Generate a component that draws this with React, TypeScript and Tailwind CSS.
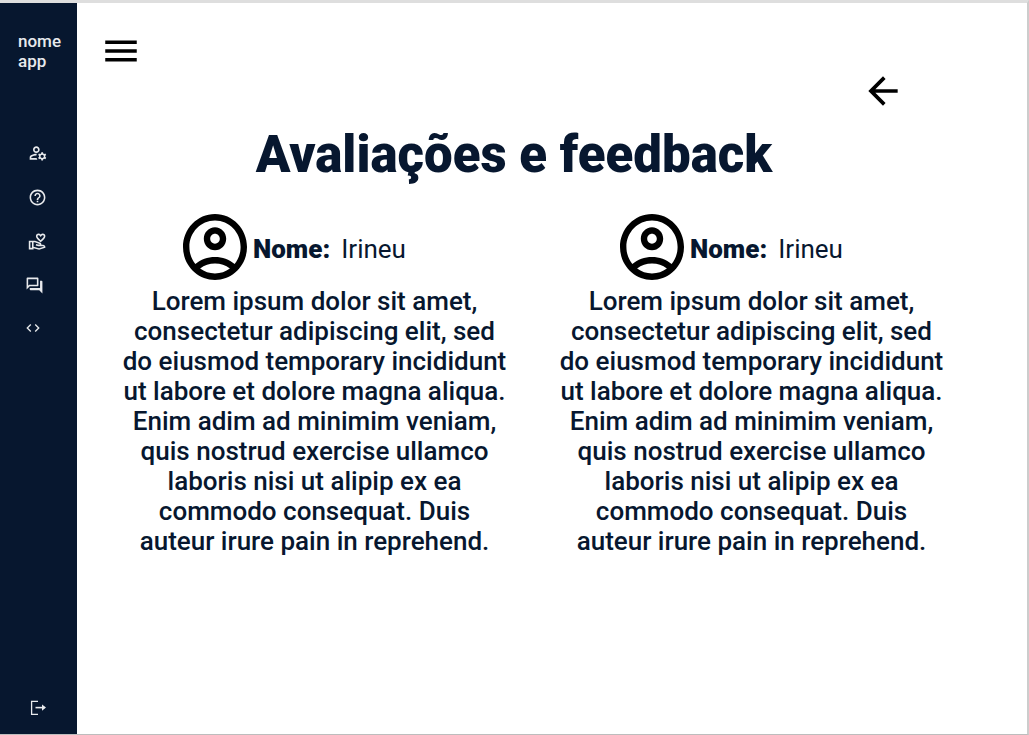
import {
  MdArrowBack,
  MdCode,
  MdHelpOutline,
  MdMenu,
  MdOutlineForum,
  MdOutlineManageAccounts,
  MdOutlineVolunteerActivism,
} from "react-icons/md";

const lorem =
  "Lorem ipsum dolor sit amet, consectetur adipiscing elit, sed do eiusmod temporary incididunt ut labore et dolore magna aliqua. Enim adim ad minimim veniam, quis nostrud exercise ullamco laboris nisi ut alipip ex ea commodo consequat. Duis auteur irure pain in reprehend.";

const reviews = [
  { id: 1, name: "Irineu", text: lorem },
  { id: 2, name: "Irineu", text: lorem },
];

function AvatarIcon() {
  return (
    <svg
      viewBox="2 2 20 20"
      preserveAspectRatio="none"
      className="h-[66px] w-16 shrink-0 fill-black"
      aria-hidden="true"
    >
      <path d="M12 2C6.48 2 2 6.48 2 12s4.48 10 10 10 10-4.48 10-10S17.52 2 12 2zM7.35 18.5C8.66 17.56 10.26 17 12 17s3.34.56 4.65 1.5c-1.31.94-2.91 1.5-4.65 1.5s-3.34-.56-4.65-1.5zm10.79-1.38C16.45 15.8 14.32 15 12 15s-4.45.8-6.14 2.12C4.7 15.73 4 13.95 4 12c0-4.42 3.58-8 8-8s8 3.58 8 8c0 1.95-.7 3.73-1.86 5.12zM12 6c-1.93 0-3.5 1.57-3.5 3.5S10.07 13 12 13s3.5-1.57 3.5-3.5S13.93 6 12 6zm0 5c-.83 0-1.5-.67-1.5-1.5S11.17 8 12 8s1.5.67 1.5 1.5S12.83 11 12 11z" />
    </svg>
  );
}

function ExitIcon() {
  return (
    <svg viewBox="0 0 16 16" className="size-4" fill="none" stroke="currentColor" aria-hidden="true">
      <path d="M8 1.3H1.6V14.3H8" strokeWidth="1.3" />
      <path d="M5.5 7.6H14.5" strokeWidth="1.6" />
      <path d="M12 4.4L16 7.6L12 10.8Z" fill="currentColor" stroke="none" />
    </svg>
  );
}

function Sidebar() {
  return (
    <aside className="flex w-[77px] shrink-0 flex-col bg-[#07172f] pb-[18px] pt-7 text-[#e8eaed]">
      <p className="pl-[18px] text-[17px] font-medium leading-5">
        nome
        <br />
        app
      </p>
      <nav className="mt-[72px] flex flex-col items-start gap-[25px]" aria-label="Principal">
        <a href="#conta" aria-label="Conta" className="ml-7">
          <MdOutlineManageAccounts size={20} />
        </a>
        <a href="#ajuda" aria-label="Ajuda" className="ml-7">
          <MdHelpOutline size={19} />
        </a>
        <a href="#doar" aria-label="Doar" className="ml-7">
          <MdOutlineVolunteerActivism size={19} />
        </a>
        <a href="#conversas" aria-label="Conversas" className="ml-[25px]">
          <MdOutlineForum size={19} />
        </a>
        <a href="#codigo" aria-label="Código" className="ml-[25px]">
          <MdCode size={16} />
        </a>
      </nav>
      <a href="#sair" aria-label="Sair" className="ml-[30px] mt-auto">
        <ExitIcon />
      </a>
    </aside>
  );
}

export default function App() {
  return (
    <div className="flex min-h-screen border-b border-r-2 border-t-[3px] border-b-[#bdbdbd] border-r-[#cccccc] border-t-[#dedede] bg-white font-['Roboto',sans-serif] text-[#07172f]">
      <Sidebar />
      <main className="min-w-0 flex-1 pr-[76px]">
        <header className="flex items-start justify-between pl-[23px] pr-[46px] pt-[27px] text-black">
          <button type="button" aria-label="Menu">
            <MdMenu size={42} />
          </button>
          <a href="#voltar" aria-label="Voltar" className="mt-[39px]">
            <MdArrowBack size={44} />
          </a>
        </header>
        <h1 className="mt-[10px] text-center text-[51px] font-black leading-[64px]">
          Avaliações e feedback
        </h1>
        <div className="mt-[27px] grid grid-cols-2 gap-[38px] pl-[38px]">
          {reviews.map((review) => (
            <article key={review.id} className="text-center text-[26px] font-medium leading-[30px]">
              <div className="flex items-center gap-1.5 pl-[68px]">
                <AvatarIcon />
                <p className="pt-1">
                  <strong className="mr-[11px] font-black">Nome:</strong>
                  <span className="font-normal">{review.name}</span>
                </p>
              </div>
              <p className="mt-[6px] px-1">{review.text}</p>
            </article>
          ))}
        </div>
      </main>
    </div>
  );
}
